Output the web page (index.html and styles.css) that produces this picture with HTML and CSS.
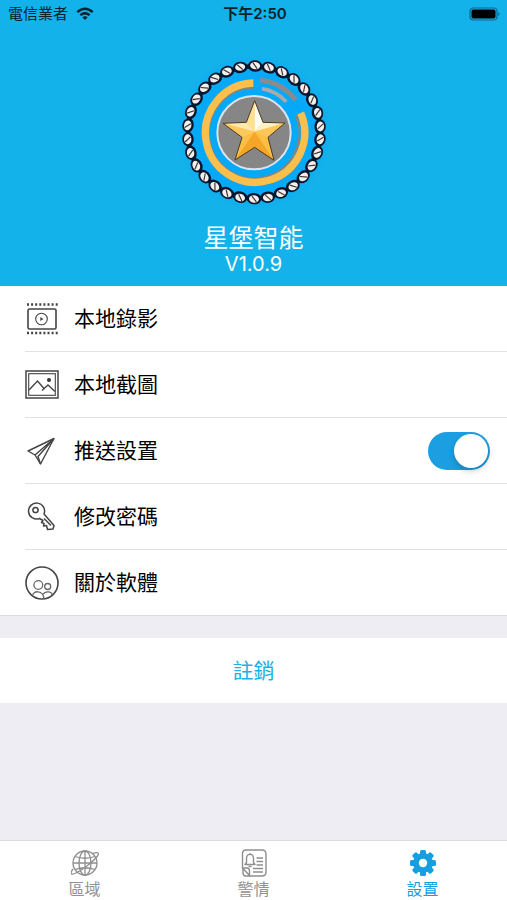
FILE: index.html
```
<!DOCTYPE html>
<html lang="zh-Hant">
<head>
    <meta charset="UTF-8">
    <meta name="viewport" content="width=device-width, initial-scale=1">
    <title>設置</title>
    <link rel="stylesheet" href="styles.css">
</head>
<body>
    <header class="header">
        <div class="status-bar">
            <div class="carrier">
                <span>電信業者</span>
                <svg width="18" height="14" viewBox="0 0 18 14" fill="none" stroke="#06222d" stroke-width="2.4">
                    <path d="M1.3 5.2 Q9 -1.6 16.7 5.2"/>
                    <path d="M4.3 8.2 Q9 4.2 13.7 8.2"/>
                    <path d="M9 13 L6.3 10.3 Q9 8.2 11.7 10.3 Z" fill="#06222d" stroke="none"/>
                </svg>
            </div>
            <span class="time">下午2:50</span>
            <svg class="battery" width="33" height="14" viewBox="0 0 33 14">
                <rect x="1" y="1" width="27" height="12" rx="3.5" fill="none" stroke="#0b6a91" stroke-width="1.2"/>
                <rect x="2.5" y="2.5" width="24" height="9" rx="2" fill="#000"/>
                <path d="M29.5 5 Q31.5 7 29.5 9 Z" fill="#0b4a66"/>
            </svg>
        </div>
        <svg class="logo" viewBox="36 29 432 432">
            <defs>
                <radialGradient id="glow">
                    <stop offset="0.75" stop-color="#06a9f8"/>
                    <stop offset="1" stop-color="#06a9f8" stop-opacity="0"/>
                </radialGradient>
                <g id="bead">
                    <path d="M229 50 Q232 31 249 30 Q268 29 275 47 Q273 63 254 64 Q236 64 229 50 Z" fill="#06162c"/>
                    <g transform="rotate(6 252 46)">
                        <ellipse cx="252" cy="46" rx="15" ry="11" fill="#f4efec"/>
                        <path d="M244 38 L259 54" fill="none" stroke="#3b3030" stroke-width="3.5"/>
                    </g>
                </g>
            </defs>
            <circle cx="252" cy="246" r="235" fill="url(#glow)"/>
            <circle cx="252" cy="246" r="198" fill="none" stroke="#06162c" stroke-width="13"/>
            <use href="#bead" transform="rotate(1 252 246)"/>
            <use href="#bead" transform="rotate(13 252 246)"/>
            <use href="#bead" transform="rotate(25 252 246)"/>
            <use href="#bead" transform="rotate(37 252 246)"/>
            <use href="#bead" transform="rotate(49 252 246)"/>
            <use href="#bead" transform="rotate(61 252 246)"/>
            <use href="#bead" transform="rotate(73 252 246)"/>
            <use href="#bead" transform="rotate(85 252 246)"/>
            <use href="#bead" transform="rotate(96 252 246)"/>
            <use href="#bead" transform="rotate(108 252 246)"/>
            <use href="#bead" transform="rotate(120 252 246)"/>
            <use href="#bead" transform="rotate(132 252 246)"/>
            <use href="#bead" transform="rotate(144 252 246)"/>
            <use href="#bead" transform="rotate(156 252 246)"/>
            <use href="#bead" transform="rotate(168 252 246)"/>
            <use href="#bead" transform="rotate(180 252 246)"/>
            <use href="#bead" transform="rotate(192 252 246)"/>
            <use href="#bead" transform="rotate(204 252 246)"/>
            <use href="#bead" transform="rotate(216 252 246)"/>
            <use href="#bead" transform="rotate(228 252 246)"/>
            <use href="#bead" transform="rotate(240 252 246)"/>
            <use href="#bead" transform="rotate(252 252 246)"/>
            <use href="#bead" transform="rotate(264 252 246)"/>
            <use href="#bead" transform="rotate(276 252 246)"/>
            <use href="#bead" transform="rotate(288 252 246)"/>
            <use href="#bead" transform="rotate(300 252 246)"/>
            <use href="#bead" transform="rotate(312 252 246)"/>
            <use href="#bead" transform="rotate(324 252 246)"/>
            <use href="#bead" transform="rotate(336 252 246)"/>
            <use href="#bead" transform="rotate(348 252 246)"/>
            <g fill="none">
                <path d="M250 112 A136 136 0 1 0 378 196" stroke="#8a8478" stroke-width="6"/>
                <path d="M250 98 A149 149 0 1 0 392 188" stroke="#fdbf4c" stroke-width="22"/>
                <path d="M270 89 A158 158 0 0 1 377 149" stroke="#8b8b8d" stroke-width="15"/>
                <path d="M276 115 A133 133 0 0 1 349 154" stroke="#a9abad" stroke-width="11"/>
            </g>
            <circle cx="252" cy="247" r="110" fill="#868686" stroke="#dbe4ec" stroke-width="6"/>
            <path d="M254 151 L279 216 L345 218 L294 261 L312 330 L254 291 L195 329 L216 261 L159 219 L229 216 Z" fill="#fcbf45"/>
            <path d="M254 151 L254 244 L229 216 Z" fill="#ffdf90"/>
            <path d="M254 151 L279 216 L254 244 Z" fill="#fffdf2"/>
            <path d="M279 216 L345 218 L254 244 Z" fill="#fff1c4"/>
            <path d="M345 218 L294 261 L254 244 Z" fill="#fdc658"/>
            <path d="M159 219 L229 216 L254 244 Z" fill="#ffe9ac"/>
            <path d="M159 219 L254 244 L216 261 Z" fill="#fdc85c"/>
            <path d="M312 330 L254 244 L254 291 Z M195 329 L254 244 L254 291 Z" fill="#f5a527"/>
            <path d="M254 151 L279 216 L345 218 L294 261 L312 330 L254 291 L195 329 L216 261 L159 219 L229 216 Z" fill="none" stroke="#4a3a20" stroke-width="3"/>
        </svg>
        <h1 class="app-name">星堡智能</h1>
        <p class="version">V1.0.9</p>
    </header>

    <main class="content">
        <ul class="menu">
            <li class="menu-item">
                <svg class="menu-icon" viewBox="0 0 34 34" fill="none" stroke="#444">
                    <path d="M2 2.5 H33 M2 31 H33" stroke-width="2.4" stroke-dasharray="2 2.1"/>
                    <rect x="3" y="7" width="28" height="20" rx="1.5" stroke-width="1.6"/>
                    <circle cx="16.5" cy="17" r="5.8" stroke-width="1.1"/>
                    <path d="M15.3 15 L18.5 17 L15.3 19 Z" fill="#444" stroke="none"/>
                </svg>
                <a class="menu-link" href="#">本地錄影</a>
            </li>
            <li class="menu-item">
                <svg class="menu-icon" viewBox="0 0 34 34" fill="none" stroke="#444">
                    <rect x="1" y="3" width="32" height="27" stroke-width="1.5"/>
                    <rect x="3.7" y="5.7" width="26.6" height="21.6" stroke-width="1.1"/>
                    <path d="M4 22 L12.5 13 L19 20.5 M17 22.5 L23 17 L30 23.5" stroke-width="1.4"/>
                    <circle cx="24" cy="12" r="2" fill="#333" stroke="none"/>
                </svg>
                <a class="menu-link" href="#">本地截圖</a>
            </li>
            <li class="menu-item">
                <svg class="menu-icon" viewBox="0 0 34 34" fill="none" stroke="#444" stroke-width="1.4" stroke-linejoin="round">
                    <path d="M29 4.5 L3 17 L10 21 L15.5 30 Z"/>
                    <path d="M29 4.5 L10 21 M29 4.5 L13 22.5 L15.5 30"/>
                </svg>
                <label class="menu-link" for="push">推送設置</label>
                <input class="switch" type="checkbox" role="switch" id="push" checked>
            </li>
            <li class="menu-item">
                <svg class="menu-icon" viewBox="0 0 34 34" fill="none" stroke="#444" stroke-width="1.5" stroke-linejoin="round">
                    <path d="M19 14 A8 8 0 1 0 14.5 18.5 L18 20.5 L16.5 22.5 L19 23.5 L18.5 26 L21.5 25.5 L22.5 29.5 L28 29 L29 25.5 Z"/>
                    <path d="M19 18.5 L26 25.5"/>
                    <circle cx="10.5" cy="10" r="2.6"/>
                </svg>
                <a class="menu-link" href="#">修改密碼</a>
            </li>
            <li class="menu-item">
                <svg class="menu-icon" viewBox="0 0 34 34" fill="none" stroke="#444">
                    <circle cx="17" cy="17" r="16" stroke-width="1.6"/>
                    <g stroke="#666" stroke-width="1.3">
                        <circle cx="13.3" cy="19" r="4.4"/>
                        <circle cx="22.7" cy="20.5" r="3"/>
                        <path d="M7.5 30 C7.5 24 18.5 24 18.8 32.5 M18.3 28 C21 24.5 27 25.5 27.3 29"/>
                    </g>
                </svg>
                <a class="menu-link" href="#">關於軟體</a>
            </li>
        </ul>
        <button class="logout" type="button">註銷</button>
    </main>

    <nav class="tab-bar">
        <a class="tab" href="#">
            <svg class="tab-icon" viewBox="0 0 28 28" fill="none" stroke="#8e8e8e" stroke-width="1.3">
                <circle cx="14" cy="14" r="12"/>
                <ellipse cx="14" cy="14" rx="6" ry="12"/>
                <path d="M14 2 V26 M2 14 H26 M4 7.5 Q14 11 24 7.5 M4 20.5 Q14 17 24 20.5"/>
                <path d="M21 5 C26 2.5 29 3.5 26.5 7 C22 13 11 21 4 24.5 C-0.5 26.5 -1 24 2 20"/>
            </svg>
            <span>區域</span>
        </a>
        <a class="tab" href="#">
            <svg class="tab-icon" viewBox="0 0 28 28" fill="none" stroke="#8e8e8e" stroke-width="1.4" stroke-linejoin="round">
                <path d="M6 1 H22 Q26 1 26 5 V23 Q26 27 22 27 H10 L2.5 19 V5 Q2.5 1 6 1 Z"/>
                <path d="M3 19 H7 Q9.5 19 9.5 22 V26.5 M3 19 V24 Q3 27 6 27 H10"/>
                <path d="M5 15.5 H15 L13.5 13.5 V9.5 C13.5 4 6.5 4 6.5 9.5 V13.5 Z M10 4 V5.5 M8.5 17.5 H11.5"/>
                <path d="M16.5 9 H23 M16.5 12.5 H23 M16.5 16 H23 M13 19.5 H23 M13 23 H23"/>
            </svg>
            <span>警情</span>
        </a>
        <a class="tab active" href="#">
            <svg class="tab-icon" viewBox="0 0 28 28">
                <g fill="#169fe0">
                    <rect x="11" y="1" width="6" height="26" rx="1.5"/>
                    <rect x="11" y="1" width="6" height="26" rx="1.5" transform="rotate(45 14 14)"/>
                    <rect x="11" y="1" width="6" height="26" rx="1.5" transform="rotate(90 14 14)"/>
                    <rect x="11" y="1" width="6" height="26" rx="1.5" transform="rotate(135 14 14)"/>
                    <circle cx="14" cy="14" r="10"/>
                </g>
                <circle cx="14" cy="14" r="4.2" fill="#fff"/>
            </svg>
            <span>設置</span>
        </a>
    </nav>
</body>
</html>
```

FILE: styles.css
```
* {
    box-sizing: border-box;
}
body {
    display: flex;
    flex-direction: column;
    min-height: 100vh;
    margin: 0;
    background-color: #eeedf3;
    color: #000;
    font-family: Inter, "Noto Sans CJK TC", sans-serif;
}
a {
    color: inherit;
    text-decoration: none;
}
.header {
    display: flex;
    flex-direction: column;
    align-items: center;
    padding-bottom: 10px;
    background-color: #14b2ea;
    color: #fff;
}
.status-bar {
    display: grid;
    grid-template-columns: 1fr auto 1fr;
    align-items: center;
    width: 100%;
    height: 28px;
    padding: 0 5px 0 8px;
    color: #06222d;
    font-size: 15px;
    line-height: 28px;
}
.carrier {
    display: flex;
    align-items: center;
    gap: 8px;
}
.time {
    font-weight: 600;
}
.battery {
    justify-self: end;
}
.logo {
    width: 144px;
    height: 144px;
    margin-top: 32px;
    overflow: visible;
}
.app-name {
    margin: 20px 0 0;
    font-size: 25px;
    font-weight: 400;
    line-height: 28px;
}
.version {
    margin: 0;
    font-size: 20px;
    line-height: 24px;
}
.content {
    flex: 1;
}
.menu {
    margin: 0 0 22px;
    padding: 0 0 0 25px;
    border-bottom: 1px solid #dcdce0;
    background-color: #fff;
    list-style: none;
}
.menu-item {
    display: flex;
    align-items: center;
    gap: 15px;
    height: 66px;
    padding-right: 17px;
    border-bottom: 1px solid #e2e2e4;
}
.menu-item:last-child {
    height: 65px;
    border-bottom: none;
}
.menu-icon {
    width: 34px;
    height: 34px;
}
.menu-link {
    flex: 1;
    font-size: 21px;
    line-height: 32px;
}
.switch {
    appearance: none;
    display: flex;
    align-items: center;
    width: 62px;
    height: 38px;
    margin: 0;
    padding: 2px;
    border-radius: 19px;
    background-color: #d8d8dc;
    cursor: pointer;
}
.switch::before {
    content: "";
    width: 34px;
    height: 34px;
    border-radius: 50%;
    background-color: #fff;
    box-shadow: 0 3px 6px rgba(0, 0, 0, 0.2);
}
.switch:checked {
    justify-content: flex-end;
    background-color: #1b9fe2;
}
.logout {
    display: block;
    width: 100%;
    height: 65px;
    padding: 0 0 3px;
    border: none;
    background-color: #fff;
    color: #1cb0e6;
    font-family: inherit;
    font-size: 21px;
    cursor: pointer;
}
.tab-bar {
    display: flex;
    height: 60px;
    border-top: 1px solid #dcdce0;
    background-color: #fff;
}
.tab {
    flex: 1;
    display: flex;
    flex-direction: column;
    align-items: center;
    padding-top: 8px;
    color: #929292;
    font-size: 16px;
    line-height: 24px;
}
.tab-icon {
    flex-shrink: 0;
    width: 28px;
    height: 28px;
}
.active {
    color: #169fe0;
}
```
